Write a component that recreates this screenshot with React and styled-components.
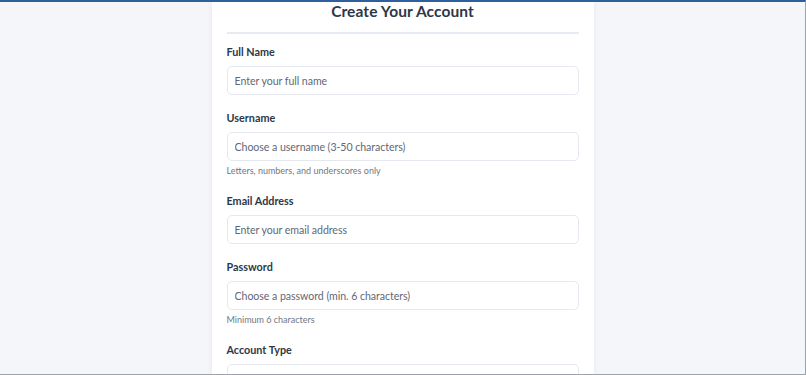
import React from 'react'
import styled, { createGlobalStyle } from 'styled-components'

const GlobalStyle = createGlobalStyle`
  * { box-sizing: border-box; }
  html, body { margin: 0; padding: 0; }
  body {
    font-family: Lato, "Open Sans", sans-serif;
    background: #f4f6fa;
    color: #2d3748;
  }
`

const Page = styled.div`
  height: 100vh;
  overflow: hidden;
  background: #f4f6fa;
  border-top: 2px solid #2f609c;
  border-right: 1px solid #9ea3aa;
  border-bottom: 1px solid #9ea3aa;
  display: flex;
  justify-content: center;
`

const Card = styled.form`
  width: 382px;
  background: #ffffff;
  padding: 0 15px;
  box-shadow: 0 0 6px rgba(30, 41, 59, 0.06);
  align-self: flex-start;
  min-height: 100%;
`

const Title = styled.h1`
  margin: -2px 0 0;
  font-size: 15.5px;
  line-height: 22px;
  font-weight: 700;
  letter-spacing: 0.1px;
  text-align: center;
  color: #2d3748;
  padding-bottom: 10px;
  border-bottom: 2px solid #e6ebf1;
`

const Fields = styled.div`
  padding-top: 11px;
`

const Group = styled.div`
  margin-bottom: 16px;
`

const Label = styled.label`
  display: block;
  font-size: 10.8px;
  line-height: 14px;
  font-weight: 700;
  color: #2d3748;
  margin-bottom: 7px;
`

const Input = styled.input`
  display: block;
  width: 100%;
  height: 29px;
  padding: 0 7px;
  border: 1px solid #e5e9ef;
  border-radius: 5px;
  font-family: inherit;
  font-size: 10.6px;
  letter-spacing: -0.05px;
  color: #2d3748;
  background: #fff;
  outline: none;
  &::placeholder { color: #5f6875; }
`

const Hint = styled.div`
  margin-top: 2px;
  font-size: 9px;
  line-height: 15px;
  color: #6f7884;
`

const fields = [
  { label: 'Full Name', placeholder: 'Enter your full name' },
  { label: 'Username', placeholder: 'Choose a username (3-50 characters)', hint: 'Letters, numbers, and underscores only' },
  { label: 'Email Address', placeholder: 'Enter your email address', type: 'email' },
  { label: 'Password', placeholder: 'Choose a password (min. 6 characters)', type: 'password', hint: 'Minimum 6 characters' },
  { label: 'Account Type', placeholder: '' },
]

export default function App() {
  return (
    <Page>
      <GlobalStyle />
      <Card onSubmit={e => e.preventDefault()}>
        <Title>Create Your Account</Title>
        <Fields>
          {fields.map(f => (
            <Group key={f.label}>
              <Label>{f.label}</Label>
              <Input type={f.type || 'text'} placeholder={f.placeholder} />
              {f.hint && <Hint>{f.hint}</Hint>}
            </Group>
          ))}
        </Fields>
      </Card>
    </Page>
  )
}
